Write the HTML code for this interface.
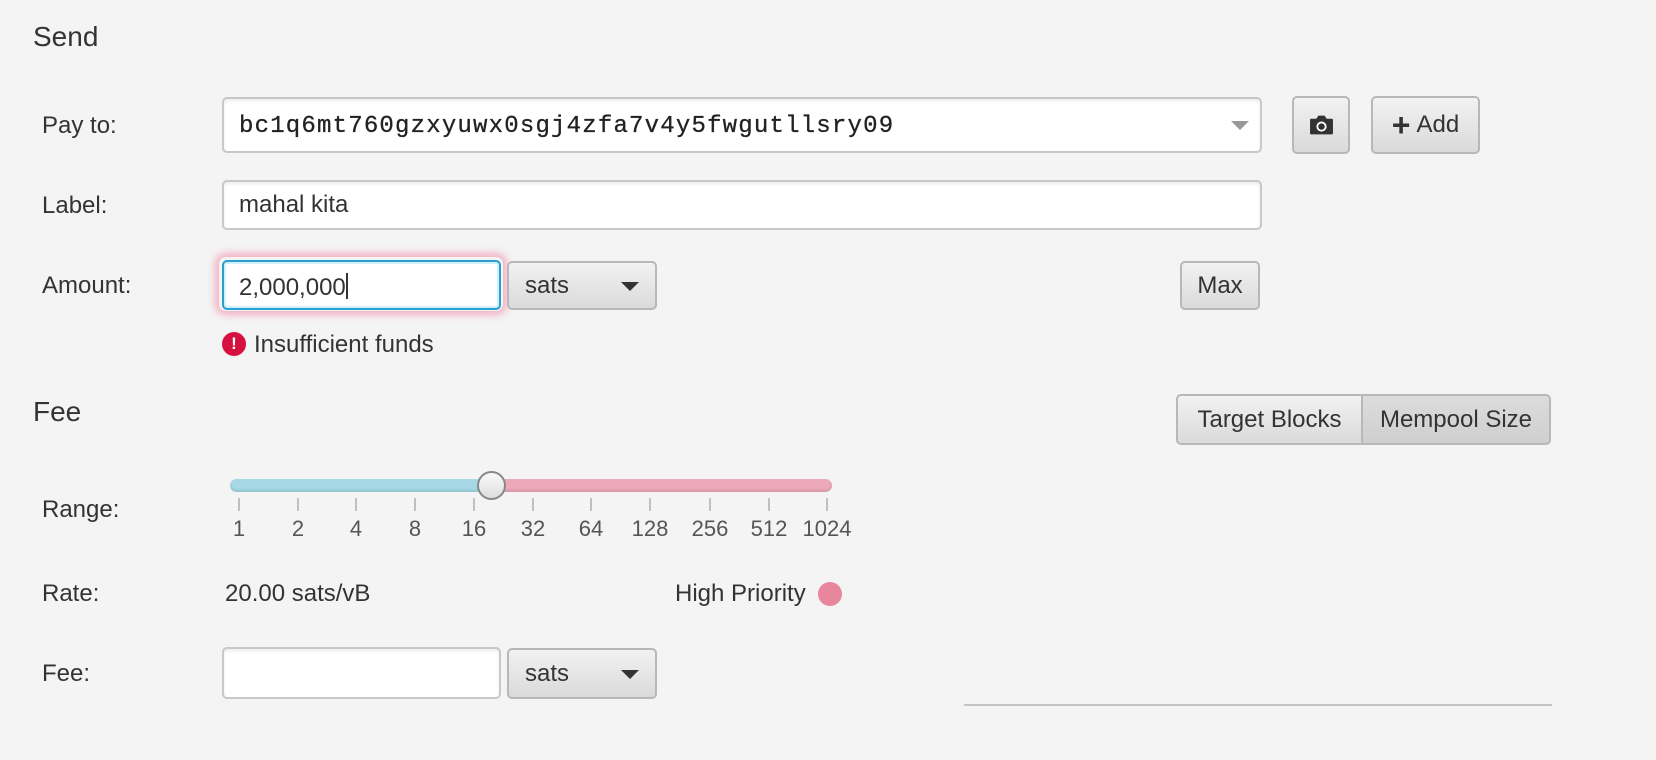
<!DOCTYPE html>
<html><head><meta charset="utf-8"><style>
body{margin:0;width:1656px;height:760px;background:#f4f4f4;font-family:"Liberation Sans",sans-serif;color:#333;position:relative;overflow:hidden}
.a{position:absolute}
.t{font-size:24px;line-height:1;color:#333}
.h{font-size:28px;color:#333}
.fld{position:absolute;background:#fff;border:2px solid #c8c8c8;border-radius:5px;box-sizing:border-box;box-shadow:inset 0 2px 3px rgba(0,0,0,.08)}
.btn{position:absolute;box-sizing:border-box;border:2px solid #b8b8b8;border-radius:5px;background:linear-gradient(#f2f2f2,#dadada);display:flex;align-items:center;justify-content:center;font-size:24px;color:#333}
.combo{justify-content:flex-start;padding-left:16px}
.arr{position:absolute;right:16px;top:50%;margin-top:-4px;width:0;height:0;border-left:9px solid transparent;border-right:9px solid transparent;border-top:9px solid #333}
.tick{position:absolute;top:498px;width:2px;height:13px;background:#c0c0c0}
.tl{position:absolute;top:516px;font-size:22px;color:#555;transform:translateX(-50%)}
</style></head><body>
<div class="a h" style="left:33px;top:21px">Send</div>
<div class="a t" style="left:42px;top:114px">Pay to:</div>
<div class="a t" style="left:42px;top:194px">Label:</div>
<div class="a t" style="left:42px;top:274px">Amount:</div>
<div class="a h" style="left:33px;top:396px">Fee</div>
<div class="a t" style="left:42px;top:498px">Range:</div>
<div class="a t" style="left:42px;top:582px">Rate:</div>
<div class="a t" style="left:42px;top:662px">Fee:</div>

<div class="fld" style="left:222px;top:97px;width:1040px;height:56px"></div>
<div class="a" style="left:239px;top:113px;font-family:'Liberation Mono',monospace;font-size:24px;letter-spacing:1.2px;color:#222;-webkit-text-stroke:0.3px #222">bc1q6mt760gzxyuwx0sgj4zfa7v4y5fwgutllsry09</div>
<div class="a" style="left:1231px;top:121px;width:0;height:0;border-left:9px solid transparent;border-right:9px solid transparent;border-top:9px solid #999"></div>

<div class="btn" style="left:1292px;top:96px;width:58px;height:58px"><svg width="25" height="22" viewBox="0 0 24 20"><path d="M2 4h5l2-3h6l2 3h5a1 1 0 0 1 1 1v13a1 1 0 0 1-1 1H2a1 1 0 0 1-1-1V5a1 1 0 0 1 1-1z" fill="#333"/><circle cx="12" cy="11.5" r="4" fill="none" stroke="#fff" stroke-width="1.8"/></svg></div>
<div class="btn" style="left:1371px;top:96px;width:109px;height:58px"><span style="font-size:32px;margin-right:6px;line-height:1;font-weight:bold">+</span>Add</div>

<div class="fld" style="left:222px;top:180px;width:1040px;height:50px"></div>
<div class="a t" style="left:239px;top:193px">mahal kita</div>

<div class="a" style="left:219px;top:257px;width:284px;height:54px;border-radius:7px;box-shadow:0 0 8px 4px rgba(240,120,155,.55)"></div>
<div class="fld" style="left:222px;top:260px;width:279px;height:50px;border:2px solid #2a9fd0;background:#fff;box-shadow:inset 0 0 0 2px #d0f0fa"></div>
<div class="a t" style="left:239px;top:273px">2,000,000<span style="display:inline-block;width:2px;height:26px;background:#333;vertical-align:-4px"></span></div>
<div class="btn combo" style="left:507px;top:261px;width:150px;height:49px">sats<span class="arr"></span></div>
<div class="btn" style="left:1180px;top:261px;width:80px;height:49px">Max</div>

<div class="a" style="left:222px;top:332px;width:24px;height:24px;border-radius:50%;background:#d6103f;color:#fff;font-weight:bold;font-size:17px;text-align:center;line-height:24px">!</div>
<div class="a t" style="left:254px;top:333px">Insufficient funds</div>

<div class="btn" style="left:1176px;top:394px;width:187px;height:51px;border-radius:5px 0 0 5px">Target Blocks</div>
<div class="btn" style="left:1361px;top:394px;width:190px;height:51px;border-radius:0 5px 5px 0;background:linear-gradient(#dcdcdc,#cfcfcf)">Mempool Size</div>

<div class="a" style="left:230px;top:479px;width:262px;height:13px;border-radius:7px 0 0 7px;background:#a6d8e6;box-shadow:inset 0 -2px 2px rgba(0,0,0,.1)"></div>
<div class="a" style="left:492px;top:479px;width:340px;height:13px;border-radius:0 7px 7px 0;background:#eda8ba;box-shadow:inset 0 -2px 2px rgba(0,0,0,.1)"></div>
<div class="a" style="left:477px;top:471px;width:29px;height:29px;box-sizing:border-box;border-radius:50%;border:2px solid #888;background:linear-gradient(#fafafa,#ddd)"></div>

<div class="tick" style="left:238px"></div><div class="tick" style="left:297px"></div><div class="tick" style="left:355px"></div><div class="tick" style="left:414px"></div><div class="tick" style="left:473px"></div><div class="tick" style="left:532px"></div><div class="tick" style="left:590px"></div><div class="tick" style="left:649px"></div><div class="tick" style="left:709px"></div><div class="tick" style="left:768px"></div><div class="tick" style="left:826px"></div>
<div class="tl" style="left:239px">1</div><div class="tl" style="left:298px">2</div><div class="tl" style="left:356px">4</div><div class="tl" style="left:415px">8</div><div class="tl" style="left:474px">16</div><div class="tl" style="left:533px">32</div><div class="tl" style="left:591px">64</div><div class="tl" style="left:650px">128</div><div class="tl" style="left:710px">256</div><div class="tl" style="left:769px">512</div><div class="tl" style="left:827px">1024</div>

<div class="a t" style="left:225px;top:582px">20.00 sats/vB</div>
<div class="a t" style="left:675px;top:582px">High Priority</div>
<div class="a" style="left:818px;top:582px;width:24px;height:24px;border-radius:50%;background:#e8869e"></div>

<div class="fld" style="left:222px;top:647px;width:279px;height:52px"></div>
<div class="btn combo" style="left:507px;top:648px;width:150px;height:51px">sats<span class="arr"></span></div>

<div class="a" style="left:964px;top:704px;width:588px;height:2px;background:#c4c4c4"></div>
</body></html>
